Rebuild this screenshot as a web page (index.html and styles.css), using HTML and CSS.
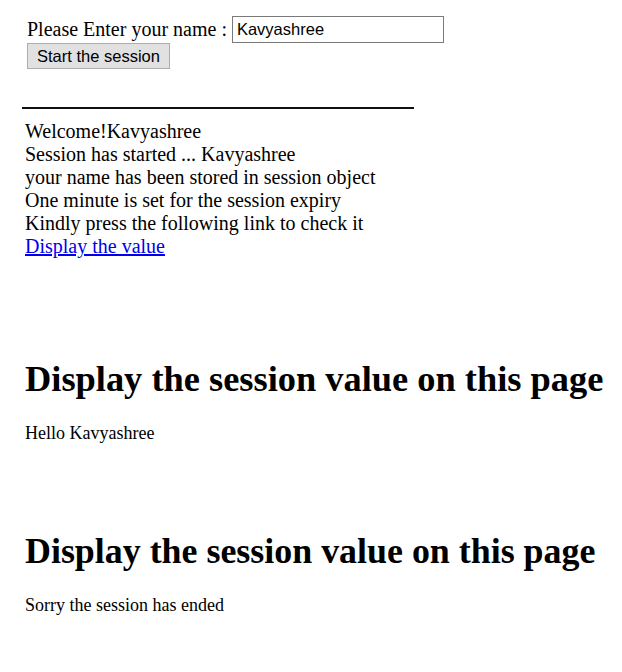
FILE: index.html
```html
<!DOCTYPE html>
<html>
<head>
<meta charset="utf-8">
<title>Session demo</title>
<link rel="stylesheet" href="styles.css">
</head>
<body>
<div class="page">
  <form class="session-form">
    <div class="name-row">
      <label class="name-label" for="uname">Please Enter your name :</label>
      <input class="name-input" id="uname" type="text" value="Kavyashree">
    </div>
    <button class="start-btn" type="button">Start the session</button>
  </form>

  <hr class="divider">

  <div class="welcome">
    <div>Welcome!Kavyashree</div>
    <div>Session has started ... Kavyashree</div>
    <div>your name has been stored in session object</div>
    <div>One minute is set for the session expiry</div>
    <div>Kindly press the following link to check it</div>
    <a class="value-link" href="#">Display the value</a>
  </div>

  <section class="result result-first">
    <h1 class="result-title">Display the session value on this page</h1>
    <p class="result-text">Hello Kavyashree</p>
  </section>

  <section class="result result-second">
    <h1 class="result-title title-narrow">Display the session value on this page</h1>
    <p class="result-text">Sorry the session has ended</p>
  </section>
</div>
</body>
</html>
```
FILE: styles.css
```css
html, body {
  margin: 0;
  padding: 0;
  background: #ffffff;
}

body {
  font-family: "Liberation Serif", "Times New Roman", serif;
  color: #000000;
}

.page {
  padding: 16px 0 0 25px;
}

.session-form {
  margin: 0 0 0 2px;
  font-size: 20px;
}

.name-row {
  display: flex;
  align-items: center;
  gap: 5px;
  height: 27px;
}

.name-label {
  line-height: 23px;
}

.name-input {
  box-sizing: border-box;
  width: 212px;
  height: 27px;
  margin: 0;
  padding: 1px 4px;
  border: 1px solid #7a7a7a;
  font-family: "Liberation Sans", Arial, sans-serif;
  font-size: 16.5px;
  color: #000;
  background: #fff;
}

.start-btn {
  display: block;
  box-sizing: border-box;
  width: 143px;
  height: 26px;
  margin: 0;
  padding: 0 9px;
  text-align: left;
  border: 1px solid #adadad;
  background: #e1e1e1;
  font-family: "Liberation Sans", Arial, sans-serif;
  font-size: 16.5px;
  color: #000;
}

.divider {
  width: 392px;
  margin: 38px 0 0 -3px;
  height: 0;
  border: 0;
  border-top: 2px solid #111;
}

.welcome {
  margin-top: 11px;
  font-size: 20px;
  line-height: 23px;
}

.value-link {
  color: #0000ee;
  text-decoration: underline;
}

.result-title {
  margin: 0;
  font-size: 36.4px;
  font-weight: bold;
  line-height: 42px;
}

.result-text {
  margin: 23px 0 0;
  font-size: 18px;
  line-height: 21px;
}

.result-first {
  margin-top: 100px;
}

.result-second {
  margin-top: 86px;
}

.title-narrow {
  font-size: 35.9px;
}
```
